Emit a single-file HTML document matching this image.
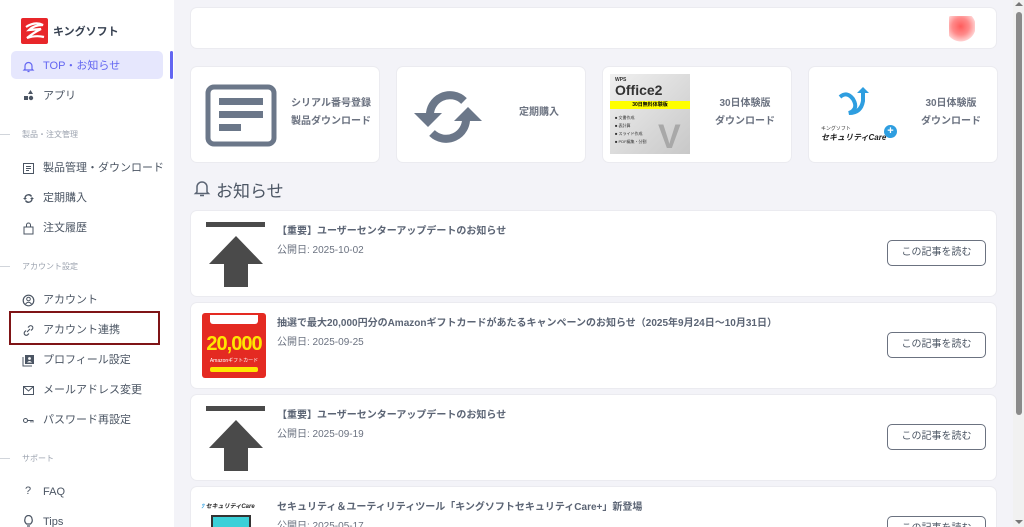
<!DOCTYPE html>
<html style="overflow:hidden;height:527px"><head><meta charset="utf-8"><style>
*{box-sizing:border-box;margin:0;padding:0}
html,body{width:1024px;height:527px;overflow:hidden}
body{background:#f3f3f8;font-family:"Liberation Sans","Noto Sans CJK JP",sans-serif;color:#4b5563;position:relative}
.sb{position:absolute;left:0;top:0;width:174px;height:527px;background:#fff}
.a{position:absolute}
.mi{position:absolute;left:43px;font-size:11px;color:#4b5563;line-height:14px}
.ic{position:absolute;left:22px;width:13px;height:13px}
.sec{position:absolute;left:22px;font-size:8px;color:#9ca3af}
.secl{position:absolute;left:0;width:10px;height:1px;background:#d1d5db}
.card{position:absolute;background:#fff;border-radius:6px;box-shadow:0 0 0 1px #ebebf0;overflow:hidden}
.tt{position:absolute;font-size:10px;font-weight:bold;color:#6b7280;text-align:center;line-height:18px}
.nt{position:absolute;left:86px;top:11px;font-size:10px;font-weight:bold;color:#5b6474}
.nd{position:absolute;left:86px;top:30px;font-size:10px;color:#6b7280}
.btn{position:absolute;left:696px;top:29px;width:99px;height:26px;border:1px solid #6b7280;border-radius:5px;font-size:10px;color:#4b5563;text-align:center;line-height:24px;background:#fff}
</style></head><body>
<div class="sb">
 <div class="a" style="left:21px;top:18px;width:27px;height:26px;background:#e8262a;border-radius:2px">
  <svg width="27" height="26" viewBox="0 0 27 26"><path d="M5 9 Q14 3 22 7 Q13 7 8 12 L20 11 Q12 15 6 20 Q15 17 23 19" stroke="#fff" stroke-width="2.2" fill="none"/></svg></div>
 <div class="a" style="left:53px;top:23px;font-size:11px;font-weight:bold;color:#374151">キングソフト</div>
 <div class="a" style="left:11px;top:51px;width:152px;height:28px;background:#e6e7fd;border-radius:5px"></div>
 <div class="a" style="left:170px;top:51px;width:3px;height:28px;background:#6366f1;border-radius:2px"></div>
 <svg class="ic" style="top:60px" viewBox="0 0 13 13"><path d="M3 9 V6 a3.5 3.5 0 0 1 7 0 V9 L11 10 H2 Z M5.5 11.5 h2" stroke="#6366f1" stroke-width="1.2" fill="none"/></svg>
 <div class="mi" style="top:59px;color:#6366f1">TOP・お知らせ</div>
 <svg class="ic" style="top:89px" viewBox="0 0 13 13"><path d="M8.5 1 L11 5 H6Z" fill="#4b5563"/><rect x="2" y="7" width="4" height="4" fill="#4b5563"/><circle cx="9" cy="9" r="2.2" fill="#4b5563"/></svg>
 <div class="mi" style="top:89px">アプリ</div>
 <div class="secl" style="top:134px"></div><div class="sec" style="top:129px">製品・注文管理</div>
 <svg class="ic" style="top:162px" viewBox="0 0 13 13"><rect x="1.5" y="1.5" width="10" height="10" stroke="#4b5563" fill="none"/><path d="M4 4.5h5M4 6.5h5M4 8.5h3" stroke="#4b5563"/></svg>
 <div class="mi" style="top:161px">製品管理・ダウンロード</div>
 <svg class="ic" style="top:192px" viewBox="0 0 13 13"><path d="M3 6 a3.5 3.5 0 0 1 6.5 -1.5 M10 7 a3.5 3.5 0 0 1 -6.5 1.5" stroke="#4b5563" stroke-width="1.4" fill="none"/><path d="M1 6h4l-2 2zM12 7h-4l2-2z" fill="#4b5563"/></svg>
 <div class="mi" style="top:191px">定期購入</div>
 <svg class="ic" style="top:222px" viewBox="0 0 13 13"><rect x="2" y="5" width="9" height="7" stroke="#4b5563" fill="none"/><path d="M4.5 5V3a2 2 0 0 1 4 0v2" stroke="#4b5563" fill="none"/></svg>
 <div class="mi" style="top:221px">注文履歴</div>
 <div class="secl" style="top:266px"></div><div class="sec" style="top:261px">アカウント設定</div>
 <svg class="ic" style="top:294px" viewBox="0 0 13 13"><circle cx="6.5" cy="6.5" r="5.3" stroke="#4b5563" stroke-width="1.2" fill="none"/><circle cx="6.5" cy="5" r="1.8" stroke="#4b5563" fill="none"/><path d="M3.5 10 Q6.5 6.5 9.5 10" stroke="#4b5563" fill="none"/></svg>
 <div class="mi" style="top:293px">アカウント</div>
 <div class="a" style="left:9px;top:311px;width:151px;height:34px;border:2px solid #7f1416"></div>
 <svg class="ic" style="top:324px" viewBox="0 0 13 13"><path d="M5 8 L8 5 M6 3.5 l1.2-1.2 a2 2 0 0 1 3 3 L9 6.5 M7 9.5 l-1.2 1.2 a2 2 0 0 1 -3 -3 L4 6.5" stroke="#4b5563" stroke-width="1.1" fill="none"/></svg>
 <div class="mi" style="top:323px">アカウント連携</div>
 <svg class="ic" style="top:354px" viewBox="0 0 13 13"><rect x="3" y="1" width="9" height="9" fill="#4b5563"/><path d="M1 3v9h9" stroke="#4b5563" fill="none"/><circle cx="7.5" cy="4.5" r="1.4" fill="#fff"/><path d="M5 8.5q2.5-3 5 0z" fill="#fff"/></svg>
 <div class="mi" style="top:353px">プロフィール設定</div>
 <svg class="ic" style="top:384px" viewBox="0 0 13 13"><rect x="1.5" y="2.5" width="10" height="8" stroke="#4b5563" fill="none"/><path d="M1.5 2.5 L6.5 7 L11.5 2.5" stroke="#4b5563" fill="none"/></svg>
 <div class="mi" style="top:383px">メールアドレス変更</div>
 <svg class="ic" style="top:414px" viewBox="0 0 13 13"><circle cx="3.5" cy="6.5" r="2" stroke="#4b5563" fill="none"/><path d="M5.5 6.5h6M9 6.5v2M11 6.5v2" stroke="#4b5563" fill="none"/></svg>
 <div class="mi" style="top:413px">パスワード再設定</div>
 <div class="secl" style="top:458px"></div><div class="sec" style="top:453px">サポート</div>
 <div class="a" style="left:25px;top:485px;font-size:11px;color:#4b5563">?</div>
 <div class="mi" style="top:485px">FAQ</div>
 <svg class="ic" style="top:515px" viewBox="0 0 13 13"><path d="M4.5 9 Q2 6.5 3 4 a3.5 3.5 0 0 1 7 0 Q11 6.5 8.5 9Z M5 11h3" stroke="#4b5563" stroke-width="1.2" fill="none"/></svg>
 <div class="mi" style="top:515px">Tips</div>
</div>

<div class="card" style="left:191px;top:8px;width:805px;height:40px">
 <div class="a" style="left:758px;top:8px;width:26px;height:26px;background:
 radial-gradient(circle at 45% 40%,#ff5c5c 0,#ff8a8a 40%,#ffd0d0 70%,transparent 72%)"></div>
</div>

<div class="card" style="left:191px;top:67px;width:188px;height:95px">
 <svg class="a" style="left:14px;top:17px" width="72" height="63" viewBox="0 0 72 63"><rect x="3" y="3" width="66" height="57" rx="6" stroke="#6b7789" stroke-width="5" fill="none"/><rect x="14" y="14" width="44" height="7" fill="#6b7789"/><rect x="14" y="27" width="44" height="7" fill="#6b7789"/><rect x="14" y="40" width="22" height="7" fill="#6b7789"/></svg>
 <div class="tt" style="left:100px;top:28px">シリアル番号登録<br>製品ダウンロード</div>
</div>
<div class="card" style="left:397px;top:67px;width:188px;height:95px">
 <svg class="a" style="left:15px;top:24px" width="72" height="52" viewBox="0 0 72 52"><path d="M18 26 A20 20 0 0 1 52 10" stroke="#6b7789" stroke-width="8" fill="none"/><path d="M54 26 A20 20 0 0 1 20 42" stroke="#6b7789" stroke-width="8" fill="none"/><path d="M2 22 H30 L16 36Z" fill="#6b7789"/><path d="M70 30 H42 L56 16Z" fill="#6b7789"/></svg>
 <div class="tt" style="left:122px;top:37px">定期購入</div>
</div>
<div class="card" style="left:603px;top:67px;width:188px;height:95px">
 <div class="a" style="left:7px;top:7px;width:80px;height:80px;background:linear-gradient(135deg,#f0f0f0,#c8c8c8);overflow:hidden">
  <div class="a" style="left:5px;top:3px;font-size:5px;font-weight:bold;color:#333">WPS</div>
  <div class="a" style="left:5px;top:8px;font-size:14px;font-weight:bold;color:#333">Office2</div>
  <div class="a" style="left:0;top:27px;width:80px;height:8px;background:#ffff00;font-size:5px;font-weight:bold;text-align:center;line-height:8px;color:#000">30日無料体験版</div>
  <div class="a" style="left:5px;top:40px;font-size:4px;line-height:8px;color:#333">■ 文書作成<br>■ 表計算<br>■ スライド作成<br>■ PDF編集・分割</div>
  <div class="a" style="left:48px;top:44px;font-size:34px;font-weight:bold;color:#a8a8a8">V</div>
 </div>
 <div class="tt" style="left:112px;top:28px">30日体験版<br>ダウンロード</div>
</div>
<div class="card" style="left:809px;top:67px;width:188px;height:95px">
 <svg class="a" style="left:28px;top:20px" width="34" height="32" viewBox="0 0 34 32"><path d="M3 10 Q10 4 16 12 Q22 22 12 26 Q24 26 26 14 L26 4" stroke="#2e9ee0" stroke-width="4" fill="none"/><path d="M20 6 L26 0 L32 6Z" fill="#2e9ee0"/></svg>
 <div class="a" style="left:12px;top:58px;font-size:5px;color:#333">キングソフト</div>
 <div class="a" style="left:12px;top:65px;font-size:8px;font-style:italic;font-weight:bold;color:#222">セキュリティCare</div>
 <div class="a" style="left:75px;top:58px;width:13px;height:13px;border-radius:50%;background:#2e9ee0;color:#fff;font-size:11px;font-weight:bold;text-align:center;line-height:13px">+</div>
 <div class="tt" style="left:112px;top:28px">30日体験版<br>ダウンロード</div>
</div>

<svg class="a" style="left:193px;top:179px" width="18" height="18" viewBox="0 0 18 18"><path d="M4 13 V8 a5 5 0 0 1 10 0 V13 L15.5 14.5 H2.5 Z M7 16.5 h4" stroke="#5b6474" stroke-width="1.5" fill="none"/></svg>
<div class="a" style="left:216px;top:177px;font-size:17px;color:#4b5563">お知らせ</div>

<div class="card" style="left:191px;top:211px;width:805px;height:85px">
 <svg class="a" style="left:15px;top:11px" width="60" height="65" viewBox="0 0 60 65"><rect x="0" y="0" width="59" height="5" fill="#4a4a4a"/><path d="M3 42 L30 14 L57 42 H42 V65 H18 V42Z" fill="#4a4a4a"/></svg>
 <div class="nt">【重要】ユーザーセンターアップデートのお知らせ</div><div class="nd">公開日: 2025-10-02</div>
 <div class="btn">この記事を読む</div>
</div>
<div class="card" style="left:191px;top:303px;width:805px;height:85px">
 <div class="a" style="left:11px;top:10px;width:64px;height:65px;background:#e42a22;border-radius:3px;overflow:hidden">
  <div class="a" style="left:8px;top:2px;width:48px;height:9px;background:#fff;border-radius:0 0 3px 3px"></div>
  <div class="a" style="left:0;top:20px;width:64px;font-size:20px;font-weight:bold;color:#ffe600;text-align:center;letter-spacing:-1px">20,000</div>
  <div class="a" style="left:0;top:44px;width:64px;font-size:5px;color:#fff;text-align:center;white-space:nowrap">Amazonギフトカード</div>
  <div class="a" style="left:8px;top:54px;width:48px;height:5px;background:#ffe600;border-radius:2px"></div>
 </div>
 <div class="nt">抽選で最大20,000円分のAmazonギフトカードがあたるキャンペーンのお知らせ（2025年9月24日〜10月31日）</div><div class="nd">公開日: 2025-09-25</div>
 <div class="btn">この記事を読む</div>
</div>
<div class="card" style="left:191px;top:395px;width:805px;height:85px">
 <svg class="a" style="left:15px;top:11px" width="60" height="65" viewBox="0 0 60 65"><rect x="0" y="0" width="59" height="5" fill="#4a4a4a"/><path d="M3 42 L30 14 L57 42 H42 V65 H18 V42Z" fill="#4a4a4a"/></svg>
 <div class="nt">【重要】ユーザーセンターアップデートのお知らせ</div><div class="nd">公開日: 2025-09-19</div>
 <div class="btn">この記事を読む</div>
</div>
<div class="card" style="left:191px;top:487px;width:805px;height:40px;border-radius:6px 6px 0 0">
 <div class="a" style="left:10px;top:14px;font-size:6px;font-style:italic;font-weight:bold;color:#222"><span style="color:#2e9ee0">ﾂ</span> セキュリティCare</div>
 <div class="a" style="left:20px;top:28px;width:40px;height:20px;background:#3ad0d8;border:2px solid #333"></div>
 <div class="nt">セキュリティ＆ユーティリティツール「キングソフトセキュリティCare+」新登場</div><div class="nd">公開日: 2025-05-17</div>
 <div class="btn">この記事を読む</div>
</div>

<div class="a" style="left:1013px;top:0;width:11px;height:527px;background:#f1f1f1"></div>
<div class="a" style="left:1016px;top:12px;width:6px;height:403px;background:#8a8a8a;border-radius:3px"></div>
<div class="a" style="left:1015px;top:2px;width:0;height:0;border-left:4px solid transparent;border-right:4px solid transparent;border-bottom:4px solid #777"></div>
<div class="a" style="left:1015px;top:520px;width:0;height:0;border-left:4px solid transparent;border-right:4px solid transparent;border-top:4px solid #777"></div>
</body></html>
